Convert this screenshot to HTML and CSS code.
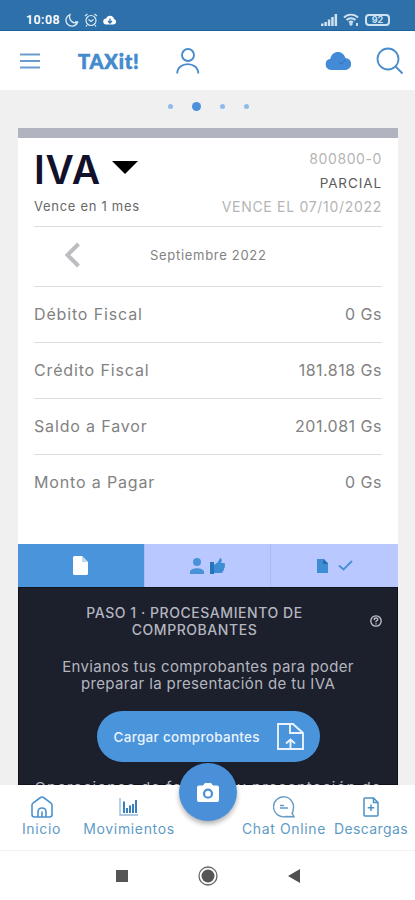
FILE: index.html
```
<!DOCTYPE html>
<html lang="es">
<head>
    <meta charset="UTF-8">
    <meta name="viewport" content="width=device-width, initial-scale=1.0">
    <title>TAXit!</title>
    <link rel="stylesheet" href="styles.css">
</head>
<body>
    <div class="app">
        <div class="status-bar">
            <div class="status-left">
                <span class="clock">10:08</span>
                <svg width="14" height="14" viewBox="0 0 14 14" fill="none" stroke="#dbe9f5" stroke-width="1.3"><path d="M5 1.5A6 6 0 1 0 12.5 9.500A6 6 0 0 1 5 1.500ZM10 9h3"/></svg>
                <svg class="alarm" width="14" height="14" viewBox="0 0 14 14" fill="none" stroke="#dbe9f5" stroke-width="1.2"><circle cx="7" cy="7.500" r="5"/><path d="M4.500 6.500L7 8.500l2.500-2M1 3l2.500-2M13 3l-2.500-2M3 12l-1 1.500M11 12l1 1.500"/></svg>
                <svg width="14" height="10" viewBox="0 0 14 10"><path d="M3.500 9.500a3 3 0 0 1-.5-6 4.200 4.200 0 0 1 8 0.500 2.800 2.800 0 0 1-.2 5.500z" fill="#fff"/><path d="M7 3.500v4M5 6l2 2 2-2" fill="none" stroke="#2d70aa" stroke-width="1.300"/></svg>
            </div>
            <div class="status-right">
                <svg width="17" height="12" viewBox="0 0 17 12" fill="#cfe2f2"><path d="M0 9.500h2.500V12H0zM3.400 8h2.500v4H3.400zM6.800 5.500h2.500V12H6.800zM10.200 3h2.500v9h-2.500zM13.600 0h2.500v12h-2.500z"/></svg>
                <svg width="17" height="13" viewBox="0 0 17 13" fill="none" stroke="#cfe2f2" stroke-width="1.900"><path d="M1 4.500a10 10 0 0 1 14 0M3.500 7a6.500 6.500 0 0 1 9 0M6 9.500a3 3 0 0 1 4 0"/><circle cx="8" cy="11" r=".7"/><path d="M14 10v3"/></svg>
                <span class="battery">92</span>
            </div>
        </div>

        <div class="header">
            <svg class="menu-icon" width="20" height="16" viewBox="0 0 20 16" stroke="#6c9bd0" stroke-width="1.800"><path d="M0 1.500h20M0 8h20M0 14.500h20"/></svg>
            <div class="logo">TAXit!</div>
            <svg class="user-icon" width="24" height="26" viewBox="0 0 24 26" fill="none" stroke="#4a8bcd" stroke-width="1.900"><circle cx="12" cy="7" r="6"/><path d="M1.200 25.500C1.200 13 22.300 13 22.300 25.500"/></svg>
            <svg class="cloud-icon" width="26" height="18" viewBox="0 0 26 18"><path d="M6 18a5.700 5.700 0 0 1-.6-11.300C7-2 18-2 20.300 6A6 6 0 0 1 20 18z" fill="#438bd6"/><path d="M14 10.500q2 2 4 0t2-2.500" fill="none" stroke="#2f72b8"/></svg>
            <svg class="search-icon" width="28" height="28" viewBox="0 0 28 28" fill="none" stroke="#4a8bcd" stroke-width="1.800"><circle cx="12" cy="12" r="10.500"/><path d="M19.500 19.500L26.500 26.500"/></svg>
        </div>

        <div class="content">
            <div class="dots">
                <span class="dot"></span>
                <span class="dot active"></span>
                <span class="dot"></span>
                <span class="dot"></span>
            </div>

            <div class="card">
                <div class="card-body">
                    <div class="card-top">
                        <div>
                            <div class="tax-name">IVA <span class="arrow-down"></span></div>
                            <div class="due">Vence en 1 mes</div>
                        </div>
                        <div class="card-info">
                            <span>800800-0</span>
                            <span class="partial">PARCIAL</span>
                            <span class="due-date">VENCE EL 07/10/2022</span>
                        </div>
                    </div>
                    <div class="period">
                        <svg width="17" height="26" viewBox="0 0 17 26" fill="none" stroke="#bbbdc2" stroke-width="4"><path d="M14.500 2L3.500 13l11 11"/></svg>
                        <span>Septiembre 2022</span>
                    </div>
                    <div class="row"><span class="label">Débito Fiscal</span><span>0 Gs</span></div>
                    <div class="row"><span class="label">Crédito Fiscal</span><span>181.818 Gs</span></div>
                    <div class="row"><span class="label">Saldo a Favor</span><span>201.081 Gs</span></div>
                    <div class="row"><span class="label">Monto a Pagar</span><span>0 Gs</span></div>
                </div>

                <div class="tabs">
                    <div class="tab active">
                        <svg width="15" height="19" viewBox="0 0 15 19"><path d="M1.500 0H9l6 6v11.500a1.500 1.500 0 0 1-1.500 1.500h-12A1.500 1.500 0 0 1 0 17.500v-16A1.500 1.500 0 0 1 1.500 0z" fill="#fff"/><path d="M9 0v6h6z" fill="#bed8f2"/></svg>
                    </div>
                    <div class="tab">
                        <svg width="14" height="16" viewBox="0 0 14 16" fill="#4a92d8"><circle cx="7" cy="4" r="4"/><path d="M0 16v-2c0-5 14-5 14 0v2z"/></svg>
                        <svg width="15" height="16" viewBox="0 0 15 16"><path d="M0 4h4v12H0z" fill="#2475b9"/><path d="M4 7l4-3 2-4q3 1 1 5h3q2 1 .5 3 1 1-.5 2.500.5 1.500-1 2.500 0 2-2 2H4z" fill="#3c8dd3"/></svg>
                    </div>
                    <div class="tab files">
                        <svg width="11" height="14" viewBox="0 0 11 14"><path d="M0 0h7l4 4v10H0z" fill="#3c8dd3"/><path d="M6 0v5h5z" fill="#246caf"/></svg>
                        <svg width="15" height="11" viewBox="0 0 15 11" fill="none" stroke="#4a92d8" stroke-width="2"><path d="M1 5.500L5.500 9.500 14 1"/></svg>
                    </div>
                </div>

                <div class="step">
                    <div class="step-title">
                        <h3>PASO 1 · PROCESAMIENTO DE<br>COMPROBANTES</h3>
                        <svg class="help-icon" width="12" height="12" viewBox="0 0 12 12" fill="none" stroke="#c4c6cd" stroke-width="1.300"><circle cx="6" cy="6" r="5.200"/><path d="M4.200 5q0-2 1.900-2t1.700 1.500Q7.800 5.500 6 6.300v1M6 8.200v1.200"/></svg>
                    </div>
                    <p>Envianos tus comprobantes para poder<br>preparar la presentación de tu IVA</p>
                    <button class="upload">
                        <span>Cargar comprobantes</span>
                        <svg width="27" height="27" viewBox="0 0 27 27" fill="none" stroke="#eaf3fc" stroke-width="1.900"><path d="M1 1h15l10 9v16H1zM13 1v9h13M13.500 25V16.500M9 20.500l4.500-4 4.500 4"/></svg>
                    </button>
                    <p class="more">Operaciones de facturas y presentación de</p>
                </div>
            </div>
        </div>

        <div class="bottom-nav">
            <div class="nav-item home">
                <svg width="22" height="22" viewBox="0 0 22 22" fill="none" stroke="#4a91cf" stroke-width="1.600"><path d="M1 9q0-1 1-1.800L9.500 1.500q1.500-1 3 0L20 7.200q1 .8 1 1.800v9.500q0 2.500-2.500 2.500h-15Q1 21 1 18.500zM7 21v-5q0-4 4-4t4 4v5M11 15.500V21"/></svg>
                <span>Inicio</span>
            </div>
            <div class="nav-item moves">
                <svg width="20" height="20" viewBox="0 0 20 20" fill="none" stroke="#397fbd"><path d="M1 1v17h18" stroke="#91b7d9" stroke-width="1.300"/><path d="M5 4.500V16M8 11v5M11 8.500V16M14 7v9M17 3v13" stroke-width="2"/></svg>
                <span>Movimientos</span>
            </div>
            <div class="nav-item chat">
                <svg width="22" height="22" viewBox="0 0 22 22" fill="none" stroke="#639bc6" stroke-width="1.400"><path d="M20 14A10 10 0 1 0 13 20.500l8 .2-2-3.500q1.300-1.500 1-3.200zM7 9.500h4M7 12h8"/></svg>
                <span>Chat Online</span>
            </div>
            <div class="nav-item downloads">
                <svg width="16" height="20" viewBox="0 0 16 20" fill="none" stroke="#4d91c5" stroke-width="1.500"><path d="M2 1h8.500L15 5.500V18q0 1-1 1H2q-1 0-1-1V2q0-1 1-1zM10.500 1v4.500H15M8 7.500v6.500M4.700 10.700h6.600"/></svg>
                <span>Descargas</span>
            </div>
            <button class="camera">
                <svg width="22" height="19" viewBox="0 0 22 19"><path d="M2 2.500h4L8 0h6l2 2.500h4q2 0 2 2V17q0 2-2 2H2q-2 0-2-2V4.500q0-2 2-2z" fill="#fff"/><circle cx="11" cy="10.700" r="4" fill="none" stroke="#4a90d9" stroke-width="2.200"/></svg>
            </button>
        </div>

        <div class="system-nav">
            <svg width="12" height="12" viewBox="0 0 12 12"><path d="M0 0h12v12H0z" fill="#555"/></svg>
            <svg width="20" height="20" viewBox="0 0 20 20"><circle cx="10" cy="10" r="9" fill="none" stroke="#666" stroke-width="1.300"/><circle cx="10" cy="10" r="6.500" fill="#555"/></svg>
            <svg width="12" height="14" viewBox="0 0 12 14"><path d="M12 0v14L0 7z" fill="#505050"/></svg>
        </div>
    </div>
</body>
</html>
```
FILE: styles.css
```
* {
    box-sizing: border-box;
}

body {
    margin: 0;
    font-family: 'Inter', 'Liberation Sans', sans-serif;
    background-color: #fff;
}

svg {
    display: block;
    flex-shrink: 0;
}

button {
    border: none;
    padding: 0;
    font-family: inherit;
    cursor: pointer;
}

.app {
    height: 900px;
    display: flex;
    flex-direction: column;
    overflow: hidden;
}

/* Status bar */
.status-bar {
    height: 31px;
    flex-shrink: 0;
    display: flex;
    justify-content: space-between;
    padding: 9px 25px 0 26px;
    background-color: #2d70aa;
    border-bottom: 1px solid #20629b;
}

.status-left, .status-right {
    display: flex;
    align-items: center;
    height: 21px;
}

.status-left {
    gap: 5px;
}

.status-right {
    gap: 5px;
}

.clock {
    width: 34px;
    color: #fff;
    font-family: 'Roboto', sans-serif;
    font-size: 12.5px;
    font-weight: 600;
    letter-spacing: 0.4px;
}

.battery {
    width: 25px;
    height: 12px;
    border: 2px solid #cfe2f2;
    border-radius: 4px;
    color: #cfe2f2;
    font-size: 9px;
    font-weight: 700;
    line-height: 8px;
    text-align: center;
}

/* Header */
.header {
    height: 59px;
    flex-shrink: 0;
    display: flex;
    align-items: center;
    padding: 0 11px 0 20px;
}

.logo {
    width: 62px;
    margin-left: 38px;
    color: #438bcd;
    font-family: 'Lato', sans-serif;
    font-size: 20px;
    font-weight: 900;
    letter-spacing: 0.8px;
    white-space: nowrap;
    -webkit-text-stroke: 0.6px #438bcd;
}

.user-icon {
    margin-left: 36px;
}

.cloud-icon {
    margin-left: auto;
}

.search-icon {
    margin-left: 25px;
}

/* Content */
.content {
    height: 695px;
    flex-shrink: 0;
    padding: 0 17px 0 18px;
    background-color: #f0f0f1;
}

.dots {
    height: 38px;
    display: flex;
    align-items: center;
    justify-content: center;
    gap: 19px;
    padding-bottom: 6px;
}

.dot {
    width: 5px;
    height: 5px;
    border-radius: 50%;
    background-color: #8fbbea;
}

.dot.active {
    width: 9px;
    height: 9px;
    background-color: #4a90dc;
}

.card {
    height: 657px;
    overflow: hidden;
    background-color: #fff;
    border-top: 10px solid #b1b3c1;
}

.card-body {
    height: 406px;
    padding: 0 16px;
    color: #828282;
}

.card-top {
    height: 88px;
    display: flex;
    justify-content: space-between;
    padding-top: 9px;
}

.tax-name {
    display: flex;
    align-items: center;
    height: 45px;
    color: #11112b;
    font-size: 39px;
    font-weight: 600;
    letter-spacing: 0.8px;
}

.arrow-down {
    margin-left: 11px;
    margin-bottom: 4px;
    border: 13px solid transparent;
    border-top-color: #000;
    border-bottom: none;
}

.due {
    margin-top: 6px;
    color: #686868;
    font-size: 13px;
    letter-spacing: 0.7px;
}

.card-info {
    display: flex;
    flex-direction: column;
    text-align: right;
    color: #b5b5b5;
    font-size: 14px;
    line-height: 24px;
    letter-spacing: 0.6px;
}

.partial {
    color: #5c5c5c;
    font-size: 13.5px;
    letter-spacing: 0.9px;
}

.due-date {
    letter-spacing: 0.7px;
}

.period {
    height: 60px;
    display: flex;
    align-items: center;
    gap: 69px;
    padding: 0 0 3px 30px;
    border-top: 1px solid #dedede;
    font-size: 13px;
    letter-spacing: 0.7px;
}

.row {
    height: 56px;
    display: flex;
    align-items: center;
    justify-content: space-between;
    padding-bottom: 2px;
    border-top: 1px solid #dedede;
    font-size: 16px;
    letter-spacing: 0.5px;
}

.label {
    letter-spacing: 0.85px;
}

/* Tabs */
.tabs {
    height: 43px;
    display: flex;
}

.tab {
    width: 127px;
    display: flex;
    align-items: center;
    justify-content: center;
    gap: 6px;
    background-color: #b9c9ff;
    border-right: 1px solid #a6bef6;
}

.tab.active {
    background-color: #4a94dc;
}

.tab.files {
    gap: 10px;
    border-right: none;
}

/* Step panel */
.step {
    height: 198px;
    display: flex;
    flex-direction: column;
    align-items: center;
    background-color: #1c1f2c;
    color: #b4b6bf;
    border: 1px solid #10121c;
}

.step-title {
    width: 100%;
    display: flex;
    align-items: center;
    padding: 16px 15px 0 38px;
}

.step-title h3 {
    flex: 1;
    margin: 0;
    padding-right: 38px;
    font-size: 14px;
    font-weight: 500;
    line-height: 17px;
    letter-spacing: 0.55px;
    text-align: center;
    white-space: nowrap;
}

.step p {
    margin: 20px 0 0;
    font-size: 15px;
    line-height: 17px;
    letter-spacing: 0.37px;
    text-align: center;
    white-space: nowrap;
}

.upload {
    width: 223px;
    height: 51px;
    flex-shrink: 0;
    display: flex;
    align-items: center;
    justify-content: space-between;
    margin-top: 19px;
    padding: 0 16px 0 17px;
    border-radius: 26px;
    background-color: #4a94dc;
    color: #eaf3fc;
    font-size: 13.5px;
    font-weight: 500;
    letter-spacing: 0.3px;
}

.step .more {
    margin-top: 17px;
    letter-spacing: 1px;
}

/* Bottom navigation */
.bottom-nav {
    position: relative;
    height: 66px;
    flex-shrink: 0;
    display: flex;
    padding-left: 16px;
    background-color: #fff;
    border-bottom: 1px solid #f2f2f2;
}

.nav-item {
    display: flex;
    flex-direction: column;
    align-items: center;
    padding-top: 11px;
    color: #5f9bc6;
    font-size: 14px;
    line-height: 17px;
    letter-spacing: 0.65px;
    white-space: nowrap;
}

.nav-item svg {
    height: 22px;
    margin-bottom: 2px;
}

.home {
    width: 51px;
}

.moves {
    width: 124px;
}

.chat {
    width: 88px;
    margin-left: 49px;
}

.downloads {
    width: 76px;
    margin-left: 5px;
    letter-spacing: 0.4px;
}

.camera {
    position: absolute;
    left: 179px;
    top: -22px;
    width: 58px;
    height: 58px;
    display: flex;
    align-items: center;
    justify-content: center;
    border-radius: 50%;
    background-color: #4a90d9;
    box-shadow: 0 3px 5px rgba(0, 0, 0, 0.3);
}

/* Android buttons */
.system-nav {
    height: 49px;
    display: flex;
    align-items: center;
    justify-content: center;
    gap: 70px;
}
```
